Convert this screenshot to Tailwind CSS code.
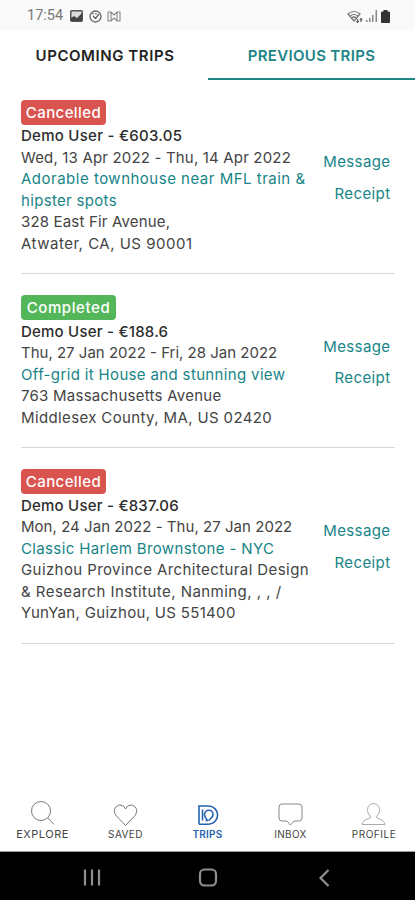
<!DOCTYPE html>
<html lang="en"><head><meta charset="utf-8"><title>Trips</title>
<script src="https://cdn.jsdelivr.net/npm/@tailwindcss/browser@4"></script></head>
<body class="w-[415px] h-[900px] flex flex-col overflow-hidden bg-white text-[#444] font-['Inter',sans-serif]">
<div class="h-[31px] shrink-0 bg-[#fafafa] flex items-center pt-px pl-[27px] pr-[25px] text-[#777]">
  <span class="w-[37px] text-[14.5px] font-['Roboto',sans-serif] whitespace-nowrap">17:54</span>
  <svg class="ml-[6px]" width="13" height="12" viewBox="0 0 13 12"><rect x=".75" y=".75" width="11.500" height="10.500" rx="1" fill="#ddd" stroke="#555" stroke-width="1.500"/><path d="M1 8l3-2 3 2 5-5v8H1z" fill="#444"/></svg>
  <svg class="ml-[6px]" width="13" height="13" viewBox="0 0 13 13" fill="none" stroke="#666" stroke-width="1.300"><circle cx="6.500" cy="6.500" r="5.500"/><path d="M4 6l2.500 2.500L10 4M4 3v1.500M7 3v1.500"/></svg>
  <svg class="ml-[5px]" width="14" height="11" viewBox="0 0 14 11" fill="none" stroke="#888" stroke-width="1.100"><path d="M1 1h3l3 3 3-3h3v9h-3L7 7l-3 3H1zM4 1v9M10 1v9"/></svg>
  <svg class="ml-auto" width="16" height="13" viewBox="0 0 16 13" fill="none" stroke="#777" stroke-width="1.200"><path d="M1 4Q7-1 13 4L7 11zM3 6Q7 3 11 6M5 8Q7 6 9 8"/><path d="M10.500 9v3M9.300 11l1.200 1.500L12 11M14 12V8.500M12.800 10L14 8.500 15.300 10" stroke="#666"/></svg>
  <svg class="ml-[3px]" width="12" height="12" viewBox="0 0 12 12" fill="#888"><path d="M0 10h1.500v2H0zM3 8h1.500v4H3zM6 5h1.500v7H6zM9.500 0H11v12H9.500z"/></svg>
  <svg class="ml-[3px]" width="9" height="13" viewBox="0 0 9 13" fill="#333"><path d="M2.500 0h4v1.500H8q1 0 1 1V12q0 1-1 1H1q-1 0-1-1V2.500q0-1 1-1h1.500z"/></svg>
</div>
<div class="h-[49px] shrink-0 flex text-[15px] font-semibold whitespace-nowrap">
  <div class="w-[208px] flex justify-center items-center pl-[2px] pt-[2px] text-[#222] tracking-[.57px]"><span>UPCOMING TRIPS</span></div>
  <div class="flex-1 flex justify-center items-center border-b-2 border-[#218487] text-[#218487] pt-[3px] tracking-[.32px]"><span>PREVIOUS TRIPS</span></div>
</div>
<main class="flex-1 pl-[21px] pr-[20px] pt-[19.5px] text-[15px] leading-[21.5px] whitespace-nowrap">
  <section class="flex items-center justify-between border-b border-[#d8d8d8] pb-[19px] h-[174.5px]">
    <div>
      <div class="h-[25px] w-[85px] mb-[.5px] rounded-[4px] bg-[#d9534f] text-white font-medium flex items-center justify-center pt-px tracking-[.4px]"><span>Cancelled</span></div>
      <p class="font-medium text-[#2d2d2d] tracking-[.27px]"><span>Demo User - €603.05</span></p>
      <p class="tracking-[.17px]"><span>Wed, 13 Apr 2022 - Thu, 14 Apr 2022</span></p>
      <p class="text-[#178487] tracking-[.5px]"><span>Adorable townhouse near MFL train &amp;</span></p>
      <p class="text-[#178487] tracking-[.32px]"><span>hipster spots</span></p>
      <p class="tracking-[.17px]"><span>328 East Fir Avenue,</span></p>
      <p class="tracking-[.5px]"><span>Atwater, CA, US 90001</span></p>
    </div>
    <div class="pr-[4.5px] pt-[2px] flex flex-col gap-[10px] items-end text-[#178487] tracking-[.4px]"><a>Message</a><a>Receipt</a></div>
  </section>
  <section class="mt-[21px] flex items-center justify-between border-b border-[#d8d8d8] pb-[19px] h-[153px]">
    <div>
      <div class="h-[25px] w-[95px] mb-[.5px] rounded-[4px] bg-[#53b658] text-white font-medium flex items-center justify-center tracking-[.6px]"><span>Completed</span></div>
      <p class="font-medium text-[#2d2d2d] tracking-[.22px]"><span>Demo User - €188.6</span></p>
      <p><span>Thu, 27 Jan 2022 - Fri, 28 Jan 2022</span></p>
      <p class="text-[#178487] tracking-[.35px]"><span>Off-grid it House and stunning view</span></p>
      <p class="tracking-[.25px]"><span>763 Massachusetts Avenue</span></p>
      <p class="tracking-[.37px]"><span>Middlesex County, MA, US 02420</span></p>
    </div>
    <div class="pr-[4.5px] pt-px flex flex-col gap-[10px] items-end text-[#178487] tracking-[.4px]"><a>Message</a><a>Receipt</a></div>
  </section>
  <section class="mt-[21px] flex items-center justify-between border-b border-[#d8d8d8] pb-[19px] h-[174.5px]">
    <div>
      <div class="h-[25px] w-[85px] mb-[.5px] rounded-[4px] bg-[#d9534f] text-white font-medium flex items-center justify-center tracking-[.4px]"><span>Cancelled</span></div>
      <p class="font-medium text-[#2d2d2d] tracking-[.22px]"><span>Demo User - €837.06</span></p>
      <p class="tracking-[.04px]"><span>Mon, 24 Jan 2022 - Thu, 27 Jan 2022</span></p>
      <p class="text-[#178487] tracking-[.36px]"><span>Classic Harlem Brownstone - NYC</span></p>
      <p class="tracking-[.41px]"><span>Guizhou Province Architectural Design</span></p>
      <p class="tracking-[.46px]"><span>&amp; Research Institute, Nanming, , , /</span></p>
      <p class="tracking-[.32px]"><span>YunYan, Guizhou, US 551400</span></p>
    </div>
    <div class="pr-[4.5px] pt-px flex flex-col gap-[10px] items-end text-[#178487] tracking-[.4px]"><a>Message</a><a>Receipt</a></div>
  </section>
</main>
<nav class="h-[59px] shrink-0 bg-white border-b border-[#999] grid grid-cols-5 text-[10px] leading-[12px] text-[#444] pt-[6px]">
  <div class="flex flex-col items-center pl-[2px]"><svg width="26" height="29" viewBox="0 0 26 29" fill="none" stroke="#777"><circle cx="11" cy="12" r="9.500"/><path d="M18 19l6 6.500"/></svg><span class="text-[11px] tracking-[.5px]">EXPLORE</span></div>
  <div class="flex flex-col items-center pl-[2px]"><svg width="26" height="29" viewBox="0 0 26 29" fill="none" stroke="#777"><path d="M12.500 26.500L3 16.500C-1 11 3 6 7 6q4 0 5.500 4Q14 6 18 6c4 0 8 5 4 10.500z"/></svg><span class="tracking-[.4px]">SAVED</span></div>
  <div class="flex flex-col items-center text-[#2462ae] font-semibold"><svg width="26" height="29" viewBox="0 0 26 29" fill="none" stroke="#2462ae" stroke-width="1.600"><path d="M4 25.200V7h9.500a9.100 9.100 0 0 1 0 18.200H4M7.500 21.500V10.500M10.500 21.500h3M12 21.500c0-2-2.500-3-2.500-6a4.300 4.300 0 0 1 8.600 0c0 3-3.100 4-4.100 6"/></svg><span class="tracking-[.2px]">TRIPS</span></div>
  <div class="flex flex-col items-center"><svg width="26" height="29" viewBox="0 0 26 29" fill="none" stroke="#888"><path d="M4 5h17q3 0 3 3v11q0 3-3 3h-5l-3.500 4L9 22H4q-3 0-3-3V8q0-3 3-3z"/></svg><span class="tracking-[.3px]">INBOX</span></div>
  <div class="flex flex-col items-center pl-px"><svg width="26" height="29" viewBox="0 0 26 29" fill="none" stroke="#aaa"><path d="M10 18c-3-3-3.500-5-3.500-7.500a6 6 0 0 1 12 0c0 2.500-.5 4.500-3.500 7.500 1 2 8 2 9 7.500H1c1-5.500 8-5.500 9-7.500z"/></svg><span class="tracking-[.55px]">PROFILE</span></div>
</nav>
<div class="h-[48px] shrink-0 bg-black"><svg width="415" height="48" viewBox="0 0 415 48" fill="none" stroke="#8e8e8e" stroke-width="2.200"><path d="M85 17.500v16M92 17.500v16M99 17.500v16M328.500 18l-8 8 8 8"/><rect x="200" y="17.500" width="16" height="16" rx="4.500"/></svg></div>
</body></html>
